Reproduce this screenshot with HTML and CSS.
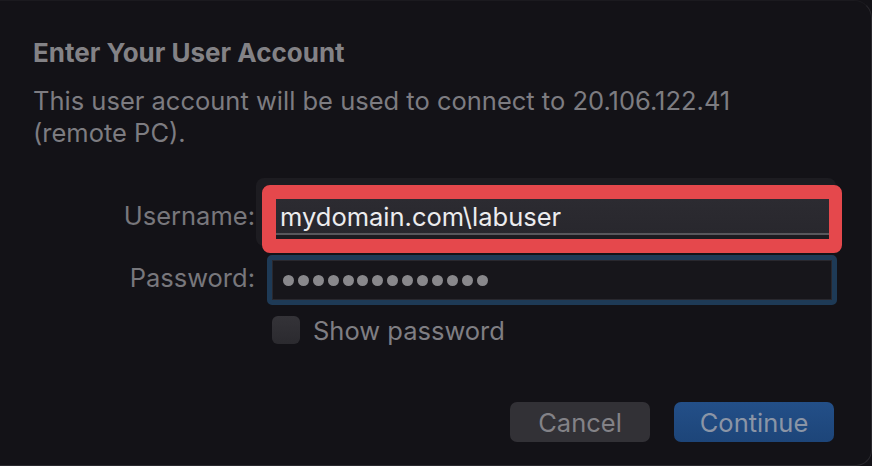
FILE: index.html
```html
<!DOCTYPE html>
<html lang="en">
<head>
  <meta charset="UTF-8">
  <title>Enter Your User Account</title>
  <link rel="stylesheet" href="styles.css">
</head>
<body>
  <div class="dialog">
    <h1 class="title">Enter Your User Account</h1>
    <p class="desc">This user account will be used to connect to 20.106.122.41 (remote PC).</p>

    <form class="form">
      <label class="label label-user" for="username">Username:</label>
      <div class="highlight">
        <div class="field field-user" id="username">mydomain.com\labuser</div>
      </div>

      <label class="label label-pass" for="password">Password:</label>
      <div class="field field-pass" id="password">
        <span class="dot"></span><span class="dot"></span><span class="dot"></span><span class="dot"></span>
        <span class="dot"></span><span class="dot"></span><span class="dot"></span><span class="dot"></span>
        <span class="dot"></span><span class="dot"></span><span class="dot"></span><span class="dot"></span>
        <span class="dot"></span><span class="dot"></span>
      </div>

      <span></span>
      <label class="check">
        <span class="box"></span>
        <span>Show password</span>
      </label>
    </form>

    <div class="actions">
      <button type="button" class="btn btn-cancel">Cancel</button>
      <button type="button" class="btn btn-continue">Continue</button>
    </div>
  </div>
</body>
</html>
```

FILE: styles.css
```css
html, body {
  margin: 0;
  padding: 0;
  background-color: #131217;
}

body {
  font-family: Inter, 'Liberation Sans', sans-serif;
  color: #7f7e83;
  overflow: hidden;
}

.dialog {
  box-sizing: border-box;
  width: 872px;
  height: 466px;
  padding: 37px 0 0 33px;
  border-top: 1px solid #1b1a1f;
  border-right: 1px solid #2a292e;
  border-bottom: 1px solid #2a292e;
  border-radius: 0 18px 16px 0;
  background-color: #131217;
}

.title {
  margin: 0;
  font-size: 26px;
  line-height: 30px;
  font-weight: 700;
  color: #838286;
}

.desc {
  margin: 17px 0 0;
  width: 760px;
  font-size: 25.5px;
  line-height: 32px;
  color: #7d7c81;
}

.form {
  display: grid;
  grid-template-columns: 222px 1fr;
  column-gap: 7px;
  align-items: start;
  margin-top: 36px;
}

.label {
  text-align: right;
  font-size: 25.5px;
  line-height: 30px;
  color: #78777c;
}

.label-user {
  padding-top: 16px;
}

.label-pass {
  padding-top: 10px;
}

.highlight {
  width: 553px;
  border: 14px solid #e5484c;
  border-right-width: 13px;
  border-radius: 8px;
  box-shadow: -6px -7px 0 0 #1d1c21;
}

.field-user {
  box-sizing: border-box;
  height: 40px;
  padding: 2px 0 0 4px;
  background: linear-gradient(#2c2b31, #28272d);
  border-bottom: 4px solid #1c1b20;
  box-shadow: inset 0 -2px 0 #58575c;
  font-size: 25.5px;
  line-height: 32px;
  color: #ececee;
}

.field-pass {
  box-sizing: border-box;
  display: flex;
  align-items: center;
  gap: 3.9px;
  width: 570px;
  height: 50px;
  margin: 2px 0 0 5px;
  padding-left: 11px;
  border: 5px solid #1e3a56;
  border-radius: 5px;
  background-color: #17161b;
  box-shadow: inset 0 0 0 1px #29282e;
}

.dot {
  width: 11px;
  height: 11px;
  border-radius: 50%;
  background-color: #89888c;
}

.check {
  display: flex;
  align-items: center;
  gap: 13px;
  margin: 9.5px 0 0 10px;
  font-size: 25.5px;
  color: #7f7e83;
}

.box {
  width: 28px;
  height: 28px;
  border-radius: 6px;
  background: linear-gradient(#343338, #2b2a2f);
}

.actions {
  display: flex;
  justify-content: flex-end;
  gap: 24px;
  margin-top: 56.5px;
  padding-right: 37px;
}

.btn {
  height: 40px;
  padding: 0;
  border: none;
  border-radius: 7px;
  font-family: inherit;
  font-size: 25.5px;
  cursor: pointer;
}

.btn-cancel {
  width: 140px;
  background-color: #323136;
  color: #838287;
}

.btn-continue {
  width: 160px;
  background: linear-gradient(#234f88, #1d4579);
  color: #8b95a6;
}
```
